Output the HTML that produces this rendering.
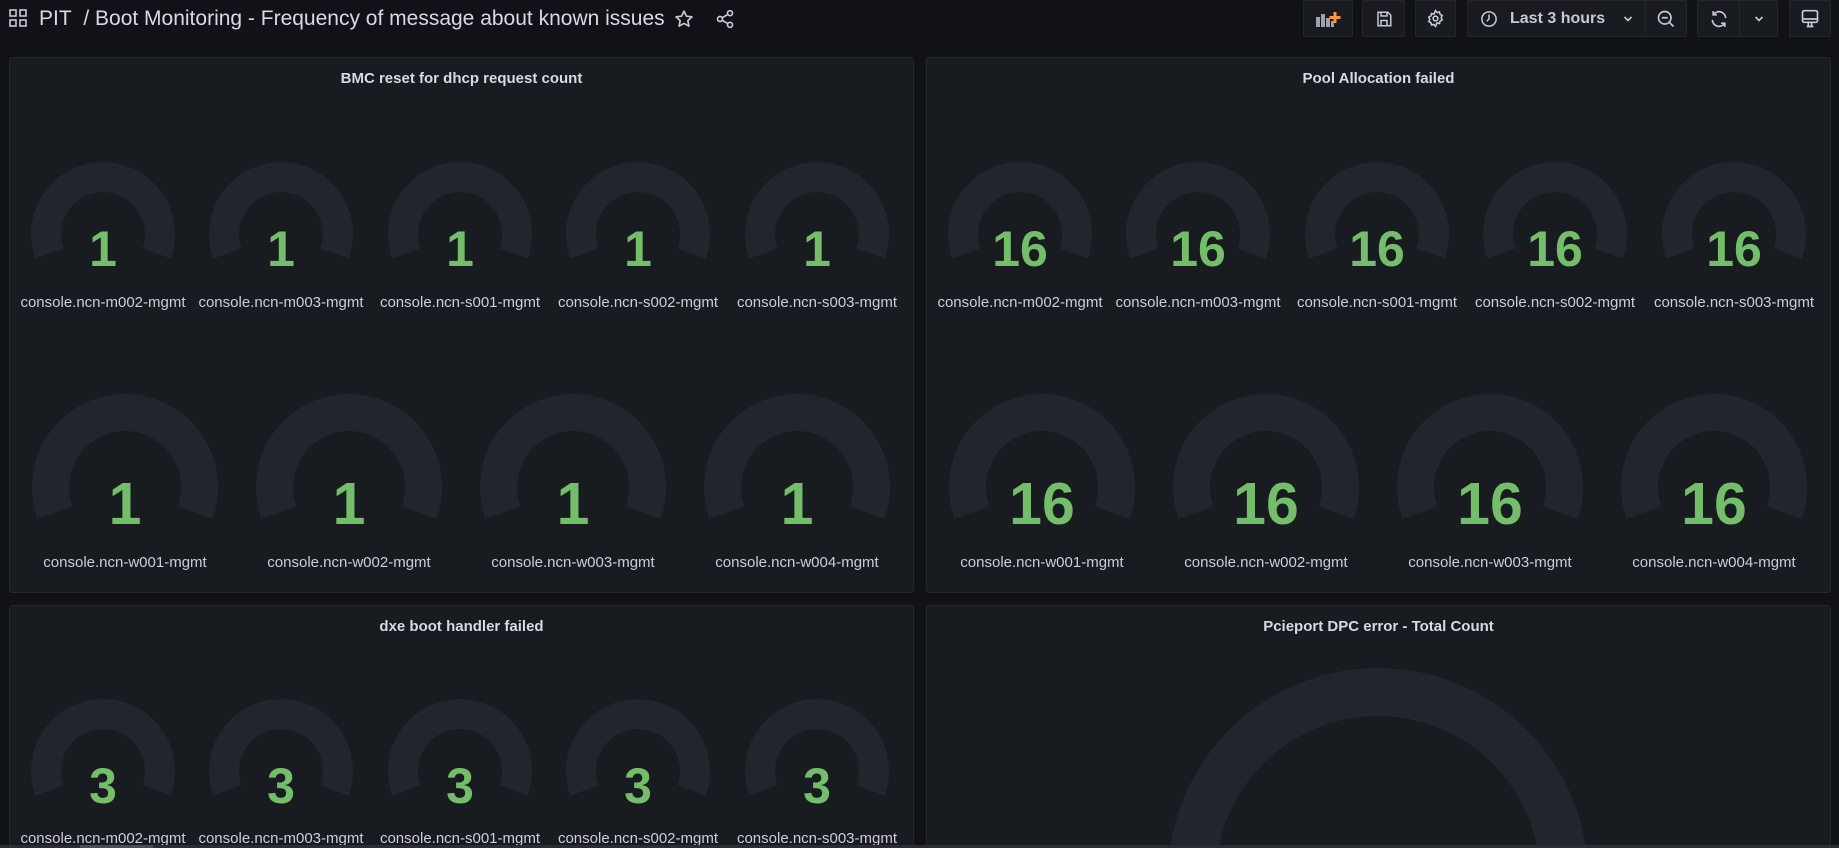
<!DOCTYPE html>
<html><head><meta charset="utf-8">
<style>
*{margin:0;padding:0;box-sizing:border-box}
html,body{width:1839px;height:848px;overflow:hidden;background:#111217;font-family:"Liberation Sans",sans-serif;color:#ccccdc}
.abs{position:absolute}
.title{position:absolute;left:39px;top:7px;font-size:21px;color:#d8d9e3;white-space:nowrap}
.btn{position:absolute;top:0;height:37px;border:1px solid #25272d;background:#181b1f;border-radius:2px;display:flex;align-items:center;justify-content:center}
.panel{position:absolute;background:#181b1f;border:1px solid #25272d;border-radius:3px;overflow:hidden}
.ptitle{position:absolute;left:0;right:0;text-align:center;font-size:15px;font-weight:bold;color:#d8d9e3;top:12px}
svg.g{position:absolute;left:0;top:0}
</style></head><body>
<svg class="abs" style="left:9px;top:9px" width="18" height="18" viewBox="0 0 18 18" fill="none" stroke="#c7c8d3" stroke-width="1.6"><rect x="1" y="1" width="6" height="6"/><rect x="11" y="1" width="6" height="6"/><rect x="1" y="11" width="6" height="6"/><rect x="11" y="11" width="6" height="6"/></svg>
<div class="title">PIT&nbsp; / Boot Monitoring - Frequency of message about known issues</div>
<svg class="abs" style="left:674px;top:9px" width="20" height="20" viewBox="0 0 24 24" fill="none" stroke="#c7c8d3" stroke-width="2" stroke-linejoin="round"><path d="M12 2.5l2.9 6.1 6.6.8-4.9 4.6 1.3 6.6L12 17.3l-5.9 3.3 1.3-6.6-4.9-4.6 6.6-.8z"/></svg>
<svg class="abs" style="left:715px;top:9px" width="20" height="20" viewBox="0 0 24 24" fill="none" stroke="#c7c8d3" stroke-width="2"><circle cx="18" cy="5" r="3"/><circle cx="6" cy="12" r="3"/><circle cx="18" cy="19" r="3"/><path d="M8.6 10.5l6.8-4M8.6 13.5l6.8 4"/></svg>

<div class="btn" style="left:1303px;width:50px"><svg width="28" height="18" viewBox="0 0 28 18"><rect x="2" y="7" width="4" height="10" fill="#9fa0aa"/><rect x="7" y="4" width="4" height="13" fill="#9fa0aa"/><rect x="12" y="8" width="4" height="9" fill="#9fa0aa"/><rect x="17" y="11" width="3" height="6" fill="#9fa0aa"/><path d="M21 2v11M15.5 7.5h11" stroke="#ff9830" stroke-width="3"/></svg></div>
<div class="btn" style="left:1362px;width:43px"><svg width="18" height="18" viewBox="0 0 24 24" fill="none" stroke="#c7c8d3" stroke-width="2"><path d="M4 3h13l4 4v14H4z"/><path d="M8 3v5h8V3M8 21v-7h8v7"/></svg></div>
<div class="btn" style="left:1415px;width:41px"><svg width="19" height="19" viewBox="0 0 24 24" fill="none" stroke="#c7c8d3" stroke-width="2"><circle cx="12" cy="12" r="3"/><path d="M12 2l2 2.5 3-.8.8 3 2.7 1.5-1.3 2.8 1.3 2.8-2.7 1.5-.8 3-3-.8L12 22l-2-2.5-3 .8-.8-3-2.7-1.5L4.8 13 3.5 10.2l2.7-1.5.8-3 3 .8z"/></svg></div>
<div class="btn" style="left:1467px;width:179px;justify-content:flex-start;padding-left:12px"><svg width="18" height="18" viewBox="0 0 24 24" fill="none" stroke="#c7c8d3" stroke-width="2"><circle cx="12" cy="12" r="9.5"/><path d="M12 6v6l-3 3"/></svg><span style="font-size:16px;font-weight:bold;color:#c7c8d3;margin-left:12px">Last 3 hours</span><svg style="margin-left:18px" width="10" height="8" viewBox="0 0 10 8" fill="none" stroke="#c7c8d3" stroke-width="1.6"><path d="M1.5 2l3.5 3.5L8.5 2"/></svg></div>
<div class="btn" style="left:1645px;width:42px"><svg width="20" height="20" viewBox="0 0 24 24" fill="none" stroke="#c7c8d3" stroke-width="2"><circle cx="10.5" cy="10.5" r="7.5"/><path d="M16 16l5 5M7 10.5h7"/></svg></div>
<div class="btn" style="left:1697px;width:43px"><svg width="20" height="20" viewBox="0 0 24 24" fill="none" stroke="#c7c8d3" stroke-width="2"><path d="M20 11a8 8 0 0 0-14.5-4.5M4 13a8 8 0 0 0 14.5 4.5"/><path d="M5 2.5v4.5h4.5M19 21.5V17h-4.5"/></svg></div>
<div class="btn" style="left:1739px;width:39px"><svg width="10" height="8" viewBox="0 0 10 8" fill="none" stroke="#c7c8d3" stroke-width="1.6"><path d="M1.5 2l3.5 3.5L8.5 2"/></svg></div>
<div class="btn" style="left:1789px;width:42px"><svg width="20" height="20" viewBox="0 0 24 24" fill="none" stroke="#c7c8d3" stroke-width="2"><rect x="3" y="2" width="18" height="14" rx="2"/><path d="M3 12h18M8 21h8M10 16v5M14 16v5"/></svg></div>

<div class="panel" style="left:9px;top:57px;width:905px;height:536px"><div class="ptitle">BMC reset for dhcp request count</div></div>
<div class="panel" style="left:926px;top:57px;width:905px;height:536px"><div class="ptitle">Pool Allocation failed</div></div>
<div class="panel" style="left:9px;top:605px;width:905px;height:242px"><div class="ptitle">dxe boot handler failed</div></div>
<div class="panel" style="left:926px;top:605px;width:905px;height:242px"><div class="ptitle">Pcieport DPC error - Total Count</div></div>

<svg class="g" width="1839" height="848" id="g"></svg>
<div class="abs" style="left:0;top:845px;width:1839px;height:3px;background:#2a2d33"></div>
<div class="abs" style="left:80px;top:845px;width:73px;height:3px;background:#4a4d55"></div>
<script>
var s='';
function arc(cx,cy,r,t){var R=r-t/2,a1=200*Math.PI/180,a2=-20*Math.PI/180;
var x1=cx+R*Math.cos(a1),y1=cy-R*Math.sin(a1),x2=cx+R*Math.cos(a2),y2=cy-R*Math.sin(a2);
return '<path d="M'+x1.toFixed(1)+' '+y1.toFixed(1)+' A'+R+' '+R+' 0 1 1 '+x2.toFixed(1)+' '+y2.toFixed(1)+'" fill="none" stroke="#22252b" stroke-width="'+t+'"/>';}
function g(cx,cy,r,t,val,fs,by,label,ly){s+=arc(cx,cy,r,t);
s+='<text x="'+cx+'" y="'+by+'" text-anchor="middle" font-family="Liberation Sans,sans-serif" font-weight="bold" font-size="'+fs+'" fill="#73bf69">'+val+'</text>';
if(label)s+='<text x="'+cx+'" y="'+ly+'" text-anchor="middle" font-family="Liberation Sans,sans-serif" font-size="15" fill="#ccccdc">'+label+'</text>';}
var tl=['console.ncn-m002-mgmt','console.ncn-m003-mgmt','console.ncn-s001-mgmt','console.ncn-s002-mgmt','console.ncn-s003-mgmt'];
var bl=['console.ncn-w001-mgmt','console.ncn-w002-mgmt','console.ncn-w003-mgmt','console.ncn-w004-mgmt'];
var tx=[103,281,460,638,817],bx=[125,349,573,797];
[[0,'1'],[917,'16']].forEach(function(p){
 for(var i=0;i<5;i++)g(tx[i]+p[0],234,72,30,p[1],50,266,tl[i],307);
 for(var i=0;i<4;i++)g(bx[i]+p[0],487,93,37,p[1],59,524,bl[i],567);
});
for(var i=0;i<5;i++)g(tx[i],771,72,30,'3',50,803,tl[i],843);
s+=arc(1378,878,210,48);
document.getElementById('g').innerHTML=s;
</script>
</body></html>
